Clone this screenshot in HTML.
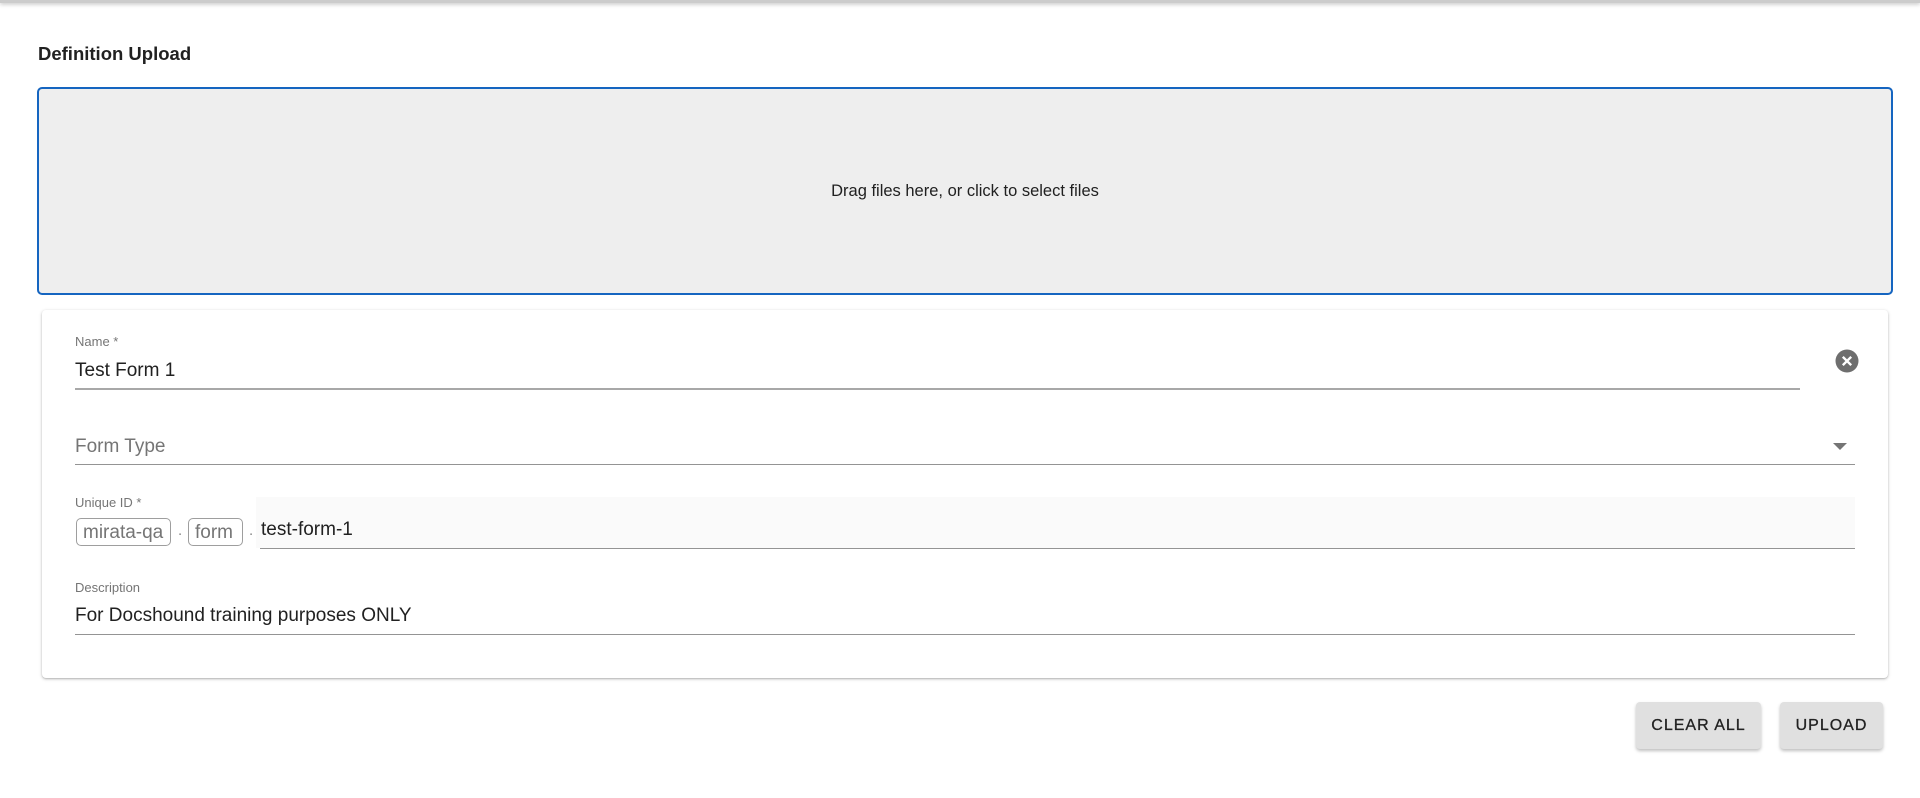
<!DOCTYPE html>
<html><head><style>
*{box-sizing:border-box;margin:0;padding:0}
body{width:1920px;height:798px;background:#fff;font-family:"Liberation Sans",sans-serif;position:relative;overflow:hidden;color:#212121}
.top{position:absolute;left:0;top:0;width:1920px;height:3px;background:#ccc;box-shadow:0 1px 4px rgba(0,0,0,.3)}
.abs{position:absolute;white-space:nowrap}
.title{left:38px;top:43px;font-size:18.5px;font-weight:bold}
.drop{position:absolute;left:37px;top:87px;width:1856px;height:208px;background:#eee;border:2px solid #1565c0;border-radius:5px;display:flex;align-items:center;justify-content:center;font-size:16.5px}
.card{position:absolute;left:42px;top:310px;width:1846px;height:368px;background:#fff;border-radius:4px;box-shadow:0 1px 3px rgba(0,0,0,.25),0 1px 1px rgba(0,0,0,.1)}
.lbl{font-size:13px;color:#757575}
.val{font-size:19px;color:#212121}
.line{position:absolute;height:1px;background:#949494}
.chip{position:absolute;top:518px;height:28px;border:1px solid #9e9e9e;border-radius:5px;font-size:19px;color:#757575;padding:0 6px;line-height:27px;overflow:hidden}
.btn{position:absolute;top:702px;height:47px;background:#e0e0e0;border-radius:4px;box-shadow:0 2px 3px rgba(0,0,0,.25);font-size:16px;letter-spacing:1px;display:flex;align-items:center;justify-content:center;color:#222;-webkit-text-stroke:.3px #222}
</style></head><body>
<div class="top"></div>
<div class="abs title">Definition Upload</div>
<div class="drop">Drag files here, or click to select files</div>
<div class="card"></div>
<div class="abs lbl" style="left:75px;top:334px">Name *</div>
<div class="abs val" style="left:75px;top:360px">Test Form 1</div>
<div class="line" style="left:75px;top:388px;width:1725px;height:2px;background:#a8a8a8"></div>
<svg class="abs" style="left:1835px;top:349px" width="24" height="24" viewBox="0 0 24 24"><circle cx="12" cy="12" r="11.5" fill="#6e6e6e"/><path d="M7.8 7.8L16.2 16.2M16.2 7.8L7.8 16.2" stroke="#fff" stroke-width="2.4"/></svg>
<div class="abs val" style="left:75px;top:436px;color:#757575">Form Type</div>
<div class="line" style="left:75px;top:464px;width:1780px"></div>
<svg class="abs" style="left:1833px;top:443px" width="14" height="8"><path d="M0 0L14 0L7 7Z" fill="#757575"/></svg>
<div class="abs" style="left:256px;top:497px;width:1599px;height:51px;background:#fafafa"></div>
<div class="abs lbl" style="left:75px;top:495px">Unique ID *</div>
<div class="chip" style="left:76px;width:95px">mirata-qa</div>
<div class="abs" style="left:178px;top:522px;color:#888;font-size:15px">.</div>
<div class="chip" style="left:188px;width:55px">form</div>
<div class="abs" style="left:249px;top:522px;color:#888;font-size:15px">.</div>
<div class="abs val" style="left:261px;top:519px">test-form-1</div>
<div class="line" style="left:260px;top:548px;width:1595px"></div>
<div class="abs lbl" style="left:75px;top:580px">Description</div>
<div class="abs val" style="left:75px;top:605px">For Docshound training purposes ONLY</div>
<div class="line" style="left:75px;top:634px;width:1780px"></div>
<div class="btn" style="left:1636px;width:125px">CLEAR ALL</div>
<div class="btn" style="left:1780px;width:103px">UPLOAD</div>
</body></html>
